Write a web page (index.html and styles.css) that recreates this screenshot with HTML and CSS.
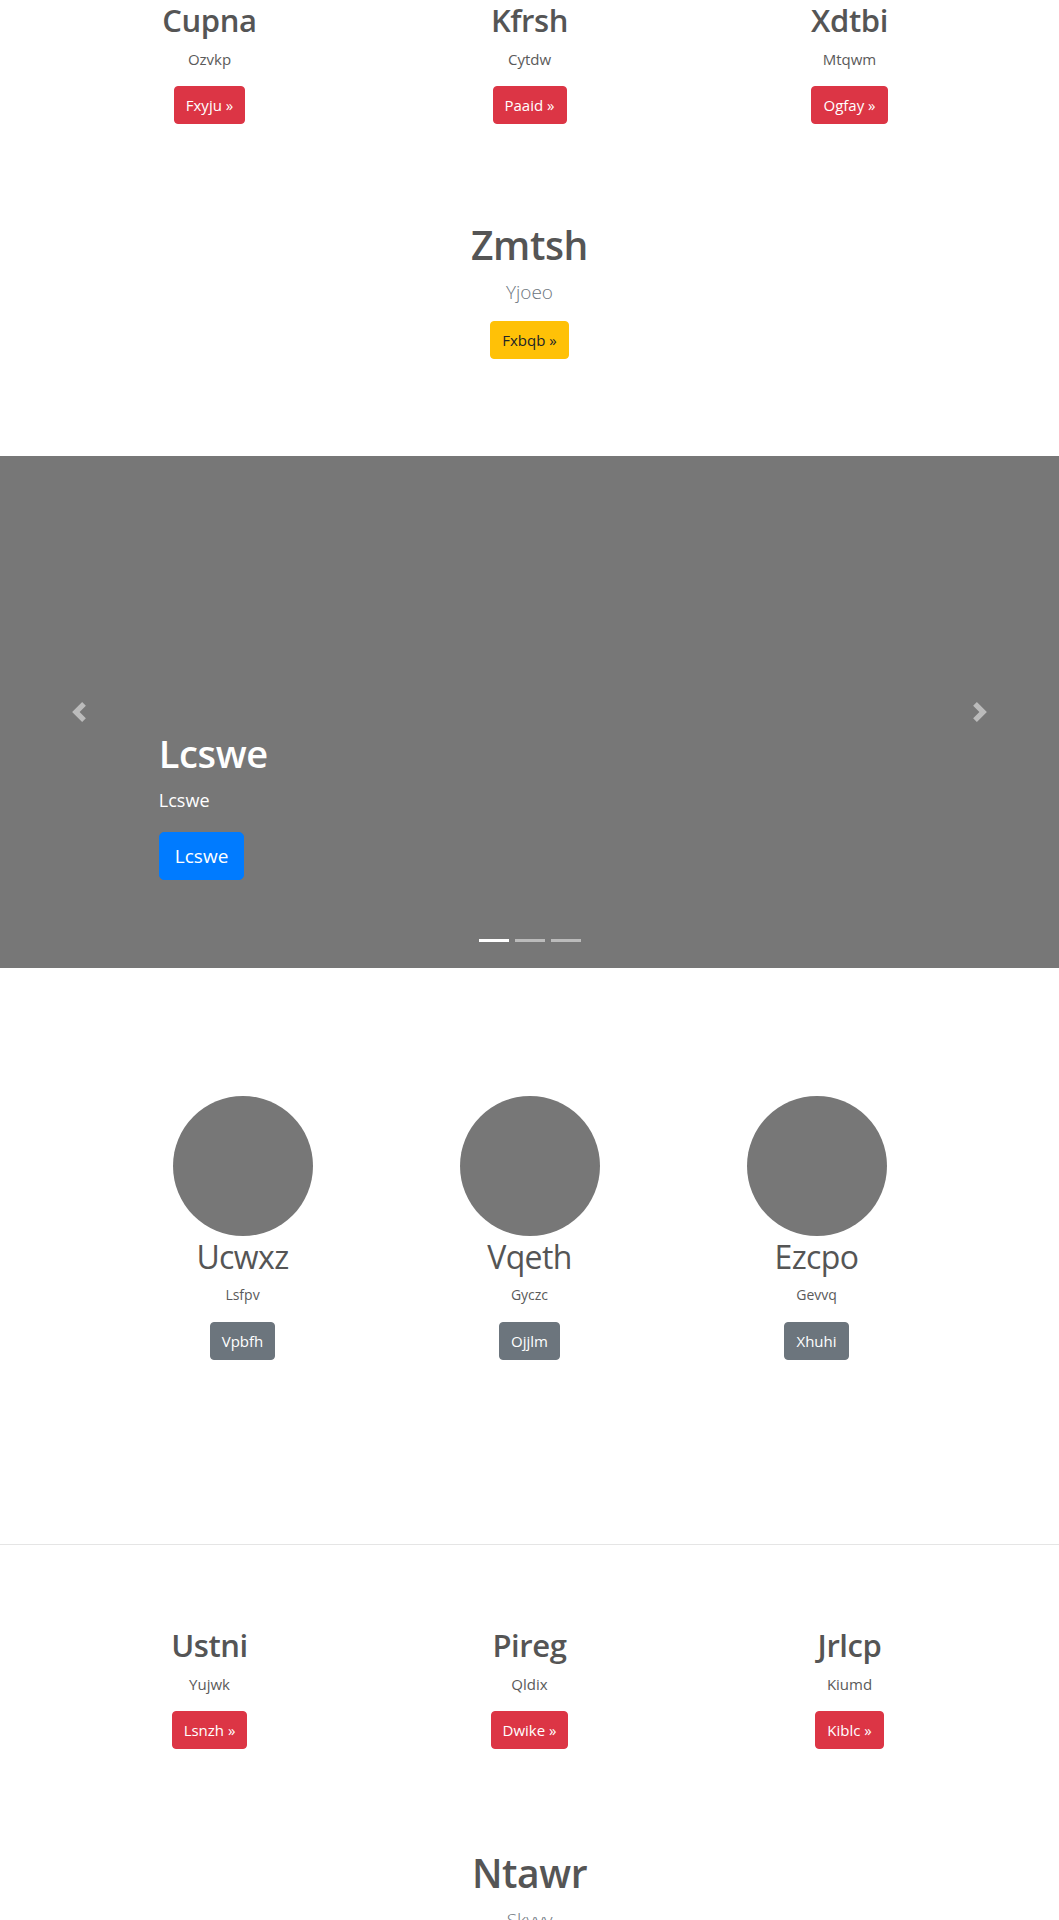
FILE: index.html
```html
<!DOCTYPE html>
<html lang="en">
<head>
<meta charset="utf-8">
<title>Page</title>
<link rel="stylesheet" href="styles.css">
</head>
<body>
<main class="page">
  <section class="trio">
    <div class="trio-col">
      <h2 class="trio-title">Cupna</h2>
      <p class="trio-text">Ozvkp</p>
      <p class="btn-line"><a class="btn btn-danger" href="#">Fxyju &raquo;</a></p>
    </div>
    <div class="trio-col">
      <h2 class="trio-title">Kfrsh</h2>
      <p class="trio-text">Cytdw</p>
      <p class="btn-line"><a class="btn btn-danger" href="#">Paaid &raquo;</a></p>
    </div>
    <div class="trio-col">
      <h2 class="trio-title">Xdtbi</h2>
      <p class="trio-text">Mtqwm</p>
      <p class="btn-line"><a class="btn btn-danger" href="#">Ogfay &raquo;</a></p>
    </div>
  </section>

  <section class="hero hero-first">
    <h1 class="hero-title">Zmtsh</h1>
    <p class="hero-lead">Yjoeo</p>
    <p class="btn-line"><a class="btn btn-warning" href="#">Fxbqb &raquo;</a></p>
  </section>

  <section class="carousel">
    <div class="carousel-caption">
      <h1 class="caption-title">Lcswe</h1>
      <p class="caption-text">Lcswe</p>
      <a class="btn btn-lg btn-primary" href="#">Lcswe</a>
    </div>
    <a class="carousel-control control-prev" href="#" aria-label="Previous">
      <svg class="control-icon" viewBox="0 0 8 8" width="20" height="20"><path d="M5.25 0l-4 4 4 4 1.5-1.5L4.25 4l2.5-2.5L5.25 0z" fill="#fff"/></svg>
    </a>
    <a class="carousel-control control-next" href="#" aria-label="Next">
      <svg class="control-icon" viewBox="0 0 8 8" width="20" height="20"><path d="M2.75 0l-1.5 1.5L3.75 4l-2.5 2.5L2.75 8l4-4-4-4z" fill="#fff"/></svg>
    </a>
    <ol class="indicators">
      <li class="indicator active"></li>
      <li class="indicator"></li>
      <li class="indicator"></li>
    </ol>
  </section>

  <section class="marketing">
    <div class="mk-col">
      <div class="avatar"></div>
      <h2 class="mk-title">Ucwxz</h2>
      <p class="mk-text">Lsfpv</p>
      <p class="btn-line"><a class="btn btn-secondary" href="#">Vpbfh</a></p>
    </div>
    <div class="mk-col">
      <div class="avatar"></div>
      <h2 class="mk-title">Vqeth</h2>
      <p class="mk-text">Gyczc</p>
      <p class="btn-line"><a class="btn btn-secondary" href="#">Ojjlm</a></p>
    </div>
    <div class="mk-col">
      <div class="avatar"></div>
      <h2 class="mk-title">Ezcpo</h2>
      <p class="mk-text">Gevvq</p>
      <p class="btn-line"><a class="btn btn-secondary" href="#">Xhuhi</a></p>
    </div>
  </section>

  <hr class="divider">

  <section class="trio trio-second">
    <div class="trio-col">
      <h2 class="trio-title">Ustni</h2>
      <p class="trio-text">Yujwk</p>
      <p class="btn-line"><a class="btn btn-danger" href="#">Lsnzh &raquo;</a></p>
    </div>
    <div class="trio-col">
      <h2 class="trio-title">Pireg</h2>
      <p class="trio-text">Qldix</p>
      <p class="btn-line"><a class="btn btn-danger" href="#">Dwike &raquo;</a></p>
    </div>
    <div class="trio-col">
      <h2 class="trio-title">Jrlcp</h2>
      <p class="trio-text">Kiumd</p>
      <p class="btn-line"><a class="btn btn-danger" href="#">Kiblc &raquo;</a></p>
    </div>
  </section>

  <section class="hero hero-last">
    <h1 class="hero-title">Ntawr</h1>
    <p class="hero-lead">Skyvy</p>
    <p class="btn-line"><a class="btn btn-warning" href="#">Qwert &raquo;</a></p>
  </section>
</main>
</body>
</html>
```

FILE: styles.css
```css
* { box-sizing: border-box; }

html, body {
  margin: 0;
  padding: 0;
  background: #fff;
}

body {
  font-family: "Open Sans", "Noto Sans", "Liberation Sans", sans-serif;
  font-size: 16px;
  color: #5a5a5a;
}

.page {
  display: flex;
  flex-direction: column;
}

p, h1, h2 { margin: 0; }

/* three-column rows */
.trio {
  width: 960px;
  margin: 0 auto;
  display: grid;
  grid-template-columns: repeat(3, 1fr);
}

.trio-second { margin-top: 80px; }

.trio-col {
  display: flex;
  flex-direction: column;
  align-items: center;
  text-align: center;
}

.trio-title {
  font-size: 31px;
  font-weight: 600;
  line-height: 38px;
  padding-top: 1px;
  margin-bottom: 7px;
  letter-spacing: -0.4px;
  color: #555;
}

.trio-text {
  font-size: 15px;
  line-height: 24px;
  padding-top: 1px;
  margin-bottom: 15px;
}

.btn-line {
  margin-bottom: 16px;
  line-height: 0;
}

/* buttons */
.btn {
  display: inline-block;
  font-size: 15px;
  line-height: 24px;
  padding: 6px 11px;
  border: 1px solid transparent;
  border-radius: 4px;
  text-decoration: none;
  color: #fff;
  white-space: nowrap;
}

.btn-danger { background: #dc3545; border-color: #dc3545; }
.btn-warning { background: #ffc107; border-color: #ffc107; color: #212529; }
.btn-secondary { background: #6c757d; border-color: #6c757d; }
.btn-primary { background: #007bff; border-color: #007bff; }

.btn-lg {
  font-size: 19px;
  line-height: 30px;
  padding: 8px 15px;
  border-radius: 5px;
}

/* centered hero */
.hero {
  display: flex;
  flex-direction: column;
  align-items: center;
  text-align: center;
}

.hero-first { margin: 79px 0 81px; }
.hero-last { margin-top: 82px; }

.hero-title {
  font-size: 39px;
  font-weight: 600;
  line-height: 48px;
  padding-top: 2px;
  margin-bottom: 6px;
  letter-spacing: -0.4px;
  color: #555;
}

.hero-lead {
  font-size: 19px;
  font-weight: 300;
  line-height: 30px;
  padding-top: 2px;
  margin-bottom: 14px;
  color: #6c757d;
}

/* carousel */
.carousel {
  position: relative;
  height: 512px;
  background: #777;
  display: flex;
  flex-direction: column;
  justify-content: flex-end;
}

.carousel-caption {
  margin: 0 15%;
  padding-bottom: 88px;
  display: flex;
  flex-direction: column;
  align-items: flex-start;
  color: #fff;
}

.caption-title {
  font-size: 38px;
  font-weight: 600;
  line-height: 48px;
  padding-top: 1px;
  margin-bottom: 7px;
  letter-spacing: -0.4px;
}

.caption-text {
  font-size: 18px;
  font-weight: 500;
  line-height: 30px;
  padding-top: 1px;
  margin-bottom: 17px;
}

.carousel-control {
  position: absolute;
  top: 0;
  bottom: 0;
  width: 15%;
  display: flex;
  align-items: center;
  justify-content: center;
  opacity: 0.5;
}

.control-prev { left: 0; }
.control-next { right: 0; }

.control-icon { display: block; }

.indicators {
  position: absolute;
  left: 0;
  right: 0;
  bottom: 0;
  margin: 0 0 16px;
  padding: 0;
  list-style: none;
  display: flex;
  justify-content: center;
}

.indicator {
  width: 30px;
  height: 3px;
  margin: 10px 3px;
  background: #fff;
  opacity: 0.5;
}

.indicator.active { opacity: 1; }

/* marketing */
.marketing {
  width: 861px;
  margin: 128px auto 0;
  display: grid;
  grid-template-columns: repeat(3, 1fr);
}

.mk-col {
  display: flex;
  flex-direction: column;
  align-items: center;
  text-align: center;
}

.avatar {
  width: 140px;
  height: 140px;
  border-radius: 50%;
  background: #777;
}

.mk-title {
  font-size: 32px;
  font-weight: 400;
  line-height: 38px;
  padding-top: 2px;
  margin-bottom: 6px;
  letter-spacing: -0.6px;
  color: #555;
}

.mk-text {
  font-size: 14px;
  line-height: 24px;
  padding-top: 1px;
  margin-bottom: 15px;
}

.divider {
  width: 100%;
  margin: 168px 0 0;
  border: 0;
  border-top: 1px solid #e5e5e5;
  height: 0;
}
```
